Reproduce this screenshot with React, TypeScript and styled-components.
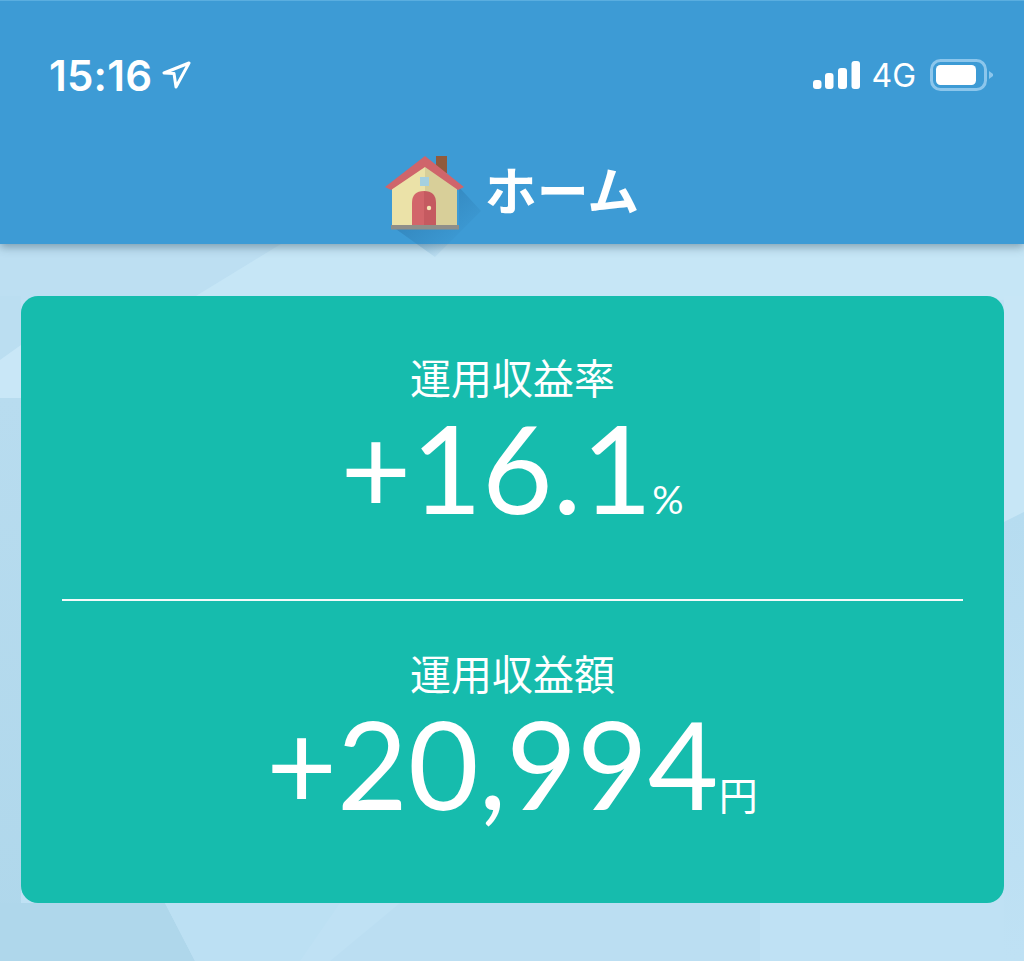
import React from "react";
import styled, { createGlobalStyle } from "styled-components";

const Global = createGlobalStyle`
  html, body { margin: 0; padding: 0; }
  body { width: 1024px; height: 961px; overflow: hidden; font-family: "Noto Sans CJK JP", sans-serif; }
`;

const Page = styled.div`
  position: relative;
  width: 1024px;
  height: 961px;
  overflow: hidden;
  display: flex;
  flex-direction: column;
  background: #bfe1f4;
`;

const Backdrop = styled.svg`
  position: absolute;
  inset: 0;
  width: 1024px;
  height: 961px;
`;

const Header = styled.header`
  position: relative;
  z-index: 2;
  height: 244px;
  flex: none;
  background: #3d9bd5;
  box-shadow: inset 0 1px 0 #5aaee0, 0 3px 9px rgba(40, 70, 90, 0.45);
  display: flex;
  flex-direction: column;
  box-sizing: border-box;
  padding: 50px 31px 0 49px;
`;

const StatusBar = styled.div`
  display: flex;
  align-items: center;
  justify-content: space-between;
  height: 50px;
  color: #fff;
`;

const StatusGroup = styled.div`
  display: flex;
  align-items: center;
`;

const Time = styled.span`
  font-family: Inter, "Liberation Sans", sans-serif;
  font-size: 42px;
  font-weight: 600;
  letter-spacing: 0.2px;
`;

const Network = styled.span`
  font-family: Inter, "Liberation Sans", sans-serif;
  font-size: 32px;
  font-weight: 400;
  margin: 0 14px 0 11px;
`;

const TitleRow = styled.div`
  display: flex;
  align-items: center;
  justify-content: center;
  margin-top: 55px;
  margin-left: -18px;
  gap: 20px;
`;

const Title = styled.h1`
  margin: 0;
  padding-bottom: 8px;
  font-family: "Noto Sans CJK JP", sans-serif;
  font-size: 52px;
  line-height: 60px;
  font-weight: 700;
  color: #fff;
`;

const Main = styled.main`
  position: relative;
  z-index: 1;
  padding: 52px 20px 0 21px;
`;

const Card = styled.section`
  height: 607px;
  box-sizing: border-box;
  background: #16bcad;
  border-radius: 17px;
  padding: 54px 41px 0;
  display: flex;
  flex-direction: column;
  color: #fff;
`;

const Metric = styled.div`
  display: flex;
  flex-direction: column;
  align-items: center;
  height: 249px;
`;

const Label = styled.div`
  font-family: "Noto Sans CJK JP", sans-serif;
  font-size: 41px;
  line-height: 52px;
  font-weight: 400;
`;

const Value = styled.div`
  font-family: Lato, sans-serif;
  font-weight: 400;
  font-size: 122px;
  line-height: 120px;
  margin-top: 5px;
  margin-left: -1px;
  white-space: nowrap;
`;

const Unit = styled.span`
  font-family: Lato, "Noto Sans CJK JP", sans-serif;
  font-size: 39px;
  font-weight: 400;
`;

const Divider = styled.hr`
  margin: 0 0 45px;
  border: 0;
  height: 2px;
  background: #f2fbfa;
`;

export default function App() {
  return (
    <Page>
      <Global />
      <Backdrop viewBox="0 0 1024 961">
        <defs>
          <linearGradient id="leftFade" x1="0" y1="0" x2="0" y2="1">
            <stop offset="0" stopColor="#b8dcef" />
            <stop offset="1" stopColor="#afd7eb" />
          </linearGradient>
          <linearGradient id="rightFade" x1="0" y1="0" x2="0" y2="1">
            <stop offset="0" stopColor="#b6dcf0" />
            <stop offset="1" stopColor="#bfe1f4" />
          </linearGradient>
        </defs>
        <polygon points="0,244 281,244 196,296 0,300" fill="#bddff2" />
        <polygon points="196,296 281,244 1024,244 1024,300" fill="#c6e6f6" />
        <polygon points="1004,296 1024,296 1024,512 1004,522" fill="#c7e6f6" />
        <polygon points="1004,522 1024,512 1024,961 1004,961" fill="url(#rightFade)" />
        <polygon points="0,296 21,296 21,345 0,360" fill="#bbdef1" />
        <polygon points="0,360 21,345 21,398 0,398" fill="#c9e7f7" />
        <polygon points="0,398 21,398 21,961 0,961" fill="url(#leftFade)" />
        <polygon points="0,903 165,903 195,961 0,961" fill="#afd7eb" />
        <polygon points="165,903 340,903 300,961 195,961" fill="#bce0f3" />
        <polygon points="400,903 760,903 760,961 330,961" fill="#bbdef2" />
      </Backdrop>
      <Header>
        <StatusBar>
          <StatusGroup>
            <Time>15:16</Time>
            <svg width="30" height="30" viewBox="0 0 30 30" style={{ marginLeft: 9 }}>
              <path d="M28 3 L3 13 L13 13.500 L15 27 Z" fill="none" stroke="#fff" strokeWidth="3" strokeLinejoin="round" />
            </svg>
          </StatusGroup>
          <StatusGroup>
            <svg width="47" height="30" viewBox="0 0 47 30" fill="#fff">
              <rect x="0" y="20" width="8.500" height="9" rx="3" />
              <rect x="12" y="13" width="8.500" height="16" rx="3" />
              <rect x="25" y="8" width="9" height="21" rx="3" />
              <rect x="38.500" y="1" width="8.500" height="28" rx="3" />
            </svg>
            <Network>4G</Network>
            <svg width="63" height="32" viewBox="0 0 63 32">
              <rect x="1.500" y="1.500" width="54" height="29" rx="9" fill="none" stroke="#8cc6ec" strokeWidth="3" />
              <rect x="6" y="6" width="40" height="20" rx="4.500" fill="#fff" />
              <path d="M59 12 L63 15 V17 L59 20 Z" fill="#8cc6ec" />
            </svg>
          </StatusGroup>
        </StatusBar>
        <TitleRow>
          <svg width="80" height="75" viewBox="0 0 80 75" style={{ overflow: "visible" }}>
            <defs>
              <linearGradient id="houseShadow" x1="0.2" y1="0.2" x2="0.8" y2="0.8">
                <stop offset="0" stopColor="#2c78ad" stopOpacity="0.65" />
                <stop offset="1" stopColor="#2c78ad" stopOpacity="0" />
              </linearGradient>
            </defs>
            <polygon points="74,32 96,56 50,102 8,72 74,72" fill="url(#houseShadow)" />
            <rect x="51" y="1" width="11" height="17" fill="#905a3d" />
            <polygon points="7,33 40,10 40,70 7,70" fill="#ebe2a8" />
            <polygon points="40,10 72,33 72,70 40,70" fill="#d8cf99" />
            <polygon points="0,32 40,1 79,32 73,35 40,12 6,35" fill="#cf656b" />
            <rect x="35" y="22" width="9" height="9" fill="#a5d0e0" />
            <path d="M27 70 V48 Q27 36 39 36 L39 70 Z" fill="#d2656a" />
            <path d="M39 36 Q51 36 51 48 V70 L39 70 Z" fill="#c55a60" />
            <circle cx="44" cy="53" r="2.200" fill="#f4e6b4" />
            <rect x="6" y="70" width="68" height="4.500" fill="#8f8f8a" />
          </svg>
          <Title>ホーム</Title>
        </TitleRow>
      </Header>
      <Main>
        <Card>
          <Metric>
            <Label>運用収益率</Label>
            <Value>+16.1<Unit>%</Unit></Value>
          </Metric>
          <Divider />
          <Metric>
            <Label>運用収益額</Label>
            <Value>+20,994<Unit>円</Unit></Value>
          </Metric>
        </Card>
      </Main>
    </Page>
  );
}
